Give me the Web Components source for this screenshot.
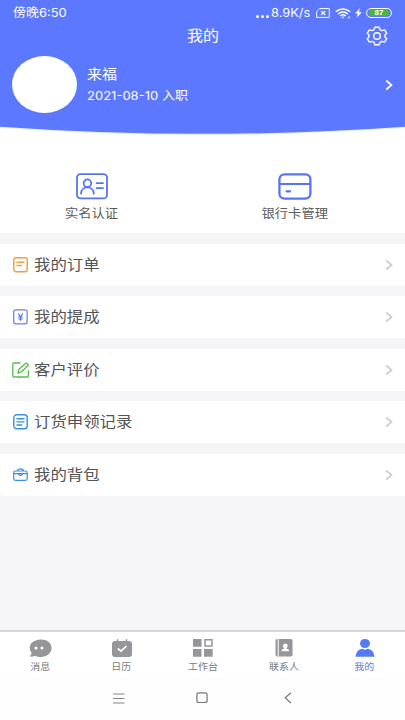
<!DOCTYPE html>
<html lang="zh-CN">
<head>
<meta charset="utf-8">
<meta name="viewport" content="width=device-width, initial-scale=1">
<title>我的</title>
<style>
html,body{margin:0;padding:0}
body{width:405px;height:720px;overflow:hidden;background:#fff;font-family:"Noto Sans CJK SC",sans-serif;color:#505050}
</style>
</head>
<body>
<mine-app></mine-app>
<script>
const define = (name, html) => customElements.define(name, class extends HTMLElement {
  connectedCallback() {
    if (this.shadowRoot) return;
    const t = document.createElement('template');
    t.innerHTML = typeof html === 'function' ? html(this) : html;
    this.attachShadow({mode:'open'}).append(t.content.cloneNode(true));
  }
});

const icons = {
  gear: [22,20,'<g fill="none" stroke="#fff" stroke-width="1.4" stroke-linejoin="round"><path d="M8.8 1.2h4.4l.7 2.5 2 1 2.7-.8 2.1 3.3-1.7 1.8v2l1.7 1.8-2.1 3.3-2.7-.7-2 1-.7 2.4H8.8l-.7-2.4-2-1-2.7.7-2.1-3.3L3 11V9L1.300 7.200l2.100-3.300 2.700.8 2-1z"/><circle cx="11" cy="10" r="3.300"/></g>'],
  sim: [14,10,'<path d="M3.500.6h9.800v8.800H.7V3.400z" fill="none" stroke="#fff"/><path d="M5 3l4.300 4M9.300 3L5 7" stroke="#fff" stroke-width="1.100"/>'],
  wifi: [16,11,'<g fill="none" stroke="#fff" stroke-width="1.400"><path d="M.7 3.700c4.200-3.600 10.200-3.600 14.400 0M3 6c3-2.500 6.900-2.500 9.900 0M5.200 8c1.700-1.400 3.900-1.400 5.600 0"/></g><path d="M6.500 8.900q1.500-1 3 0L8 10.500z" fill="#fff"/><path d="M13 8.500h2v2h-2z" fill="#c9d3ff"/>'],
  bolt: [7,10,'<path d="M5.200 0L.3 5.200l2.600.5L1.500 10l5.200-5.500-2.900-.5z" fill="#fff"/>'],
  id: [32,27,'<g fill="none" stroke="#5874f3" stroke-width="1.800"><rect x="1" y="1.200" width="30" height="24.200" rx="3.500"/><circle cx="11.400" cy="10.200" r="3.800"/><path d="M5 20.700c.4-8.400 12.400-8.400 12.800 0M20.600 10.200h6.300M20.600 15.200h6.300" stroke-linecap="round"/></g>'],
  card: [34,27,'<g fill="none" stroke="#5874f3" stroke-width="2.300"><rect x="1.400" y="1.400" width="31" height="24.200" rx="5"/><path d="M1.400 11h31" stroke-width="2"/><path d="M8.500 18.300h3.500" stroke-width="2.300" stroke-linecap="round"/></g>'],
  order: [15,16,'<g fill="none" stroke="#eda03e" stroke-width="1.400"><rect x=".8" y=".8" width="13.400" height="14" rx="2"/><path d="M3.500 5.200h8M3.500 8.500H9"/></g>'],
  money: [15,16,'<g fill="none" stroke="#7379e4" stroke-width="1.200"><rect x=".7" y=".8" width="13.400" height="14" rx="2"/><path d="M5.200 4.500l2.300 3.300 2.300-3.300M7.500 7.800v4M5.200 8h4.600M5.200 10h4.600" stroke="#5875da"/></g>'],
  edit: [18,16,'<g fill="none" stroke="#55bd4b" stroke-width="1.300" stroke-linejoin="round"><path d="M8.300 1H2q-1.200 0-1.200 1.200v11.600Q.8 15 2 15h13.200q1.200 0 1.200-1.200V8.300"/><path d="M6 11.200l.8-3.700 6.700-6q.8-.6 1.600.1l.9.8q.7.7-.1 1.400l-6.500 6z"/></g>'],
  list: [15,16,'<g fill="none" stroke="#3990dd" stroke-width="1.400"><rect x=".8" y=".8" width="13.400" height="14" rx="2.800"/><path d="M3.500 4.800h8M3.500 7.900h8M3.500 11H9"/></g>'],
  bag: [15,13,'<g fill="none" stroke="#3990dd" stroke-width="1.200"><rect x=".7" y="3" width="13.500" height="9.300" rx="1.800"/><path d="M4.500 3q0-2.200 3-2.200t3 2.200M.9 5.600h4.600M9.500 5.600h4.600"/><path d="M5.300 5.600q2.200 3.800 4.400 0z"/></g>'],
  arrow: [8,12,'<path d="M1.200 1.500L6.500 6l-5.300 4.500" fill="none" stroke="currentColor" stroke-width="1.700"/>'],
  chat: [23,19,'<path d="M11.700.4C5.500.4.700 4 .7 8.700q0 3 2 5.100Q2.500 16 .5 17.500q2.700.3 5.300-.8 2.700 1.200 5.900 1.200c6 0 10.900-3.900 10.900-9S18 .4 11.700.4z" fill="#96969a"/><g fill="#fff"><circle cx="7" cy="9" r="1.500"/><circle cx="13" cy="9" r="1.500"/></g>'],
  calendar: [20,19,'<path d="M3 2h14q3 0 3 3v10q0 3-3 3H3q-3 0-3-3V5q0-3 3-3z" fill="#96969a"/><path d="M5.500.2v2.500M14.500.2v2.500" stroke="#96969a" stroke-width="1.500"/><path d="M5.800 9.500L9 12.200 14.500 7" fill="none" stroke="#fff" stroke-width="1.700"/>'],
  grid: [20,18,'<path d="M0 0h8.500v7.700H0zM0 10h8.500v7.700H0zM11 10h8.700v7.700H11z" fill="#96969a"/><path d="M12 .8h7v6.300h-7z" fill="none" stroke="#96969a" stroke-width="1.500"/>'],
  contacts: [18,18,'<rect x=".5" width="17" height="17.500" rx="1.800" fill="#96969a"/><path d="M3.200 0v17.500" stroke="#fff"/><circle cx="10.300" cy="6.900" r="2.400" fill="#fff"/><path d="M9.300 7.500h2v2q3 .7 3 2.800H6.300q0-2.100 3-2.800z" fill="#fff"/>'],
  user: [20,18,'<ellipse cx="10" cy="4.500" rx="5" ry="4.500" fill="#5879f6"/><path d="M.4 17.700q1.200-7.500 6.800-7.900l2.800 1 2.800-1q5.600.4 6.800 7.900z" fill="#5879f6"/>'],
  menu: [12,11,'<path d="M0 1h11.500M0 5.500h11.500M0 10h11.500" stroke="#858585" stroke-width="1.100"/>'],
  home: [12,12,'<rect x=".9" y=".9" width="10.200" height="9.600" rx="2" fill="none" stroke="#777" stroke-width="1.200"/>'],
  back: [8,12,'<path d="M6.900.7L1.200 5.800l5.700 5.200" fill="none" stroke="#777" stroke-width="1.200"/>']
};

define('mine-icon', el => {
  const [w,h,s] = icons[el.getAttribute('name')];
  return `<style>:host{display:block;flex:none;width:${w}px;height:${h}px}svg{display:block}</style><svg width="${w}" height="${h}" viewBox="0 0 ${w} ${h}">${s}</svg>`;
});

/* A line of text with a slightly widened face */
define('mine-label', el => `<style>
:host{display:block;flex:none;white-space:nowrap;line-height:1.4}
span{display:inline-block;transform:scaleX(${el.getAttribute('stretch')||1});transform-origin:${el.getAttribute('from')||'left'} center}
</style><span><slot></slot></span>`);

define('status-bar', `<style>
:host{display:flex;align-items:center;height:26px;padding:0 13px 0 13px;color:#fff;font:12px Inter,"Noto Sans CJK SC",sans-serif}
.space{flex:1}.dots{display:flex;gap:2px;margin:6px 2px 0 0}.dots i{width:3px;height:3px;border-radius:50%;background:#fff}
.sim{margin-left:8px}.wifi{margin-left:5px}.bolt{margin:0 4px 0 4px}
.battery{box-sizing:border-box;width:26px;height:10px;border:1px solid #fff;border-radius:5px;padding:1px 2px;display:flex}
.fill{flex:1;border-radius:3px;background:#49b934;font:bold 8px/6.500px "Liberation Sans",sans-serif;text-align:center}
</style>
<mine-label stretch="1.08">傍晚6:50</mine-label><span class="space"></span>
<span class="dots"><i></i><i></i><i></i></span><mine-label stretch="1.07">8.9K/s</mine-label>
<mine-icon class="sim" name="sim"></mine-icon><mine-icon class="wifi" name="wifi"></mine-icon><mine-icon class="bolt" name="bolt"></mine-icon>
<div class="battery"><div class="fill">87</div></div>`);

define('profile-header', `<style>
:host{display:block;position:relative;height:134px;color:#fff}
.bg{position:absolute;inset:0;display:block}
.content{position:relative}
.title{display:grid;grid-template-columns:1fr auto 1fr;align-items:center;height:20px;font-size:15px}
.title mine-label{margin:-3px 0 1px 2px}
.title mine-icon{justify-self:end;margin-right:17px}
.person{display:flex;align-items:center;height:57px;margin:10px 12px 0}
.avatar{width:65px;height:57px;border-radius:50%;background:#fff}
.who{margin-left:10px;flex:1;font-size:14px}
.date{display:flex;font:12px/17px Inter,"Noto Sans CJK SC",sans-serif;gap:9.500px;margin-top:4px}
</style>
<svg class="bg" width="405" height="136" viewBox="0 0 405 136"><path d="M0 0H405V128Q202.500 142.400 0 128Z" fill="#e9f1fd"/><path d="M0 0H405V126.700Q202.500 141 0 126.700Z" fill="#5b78fe"/></svg>
<div class="content"><status-bar></status-bar>
<div class="title"><span></span><mine-label stretch="1.07" from="center">我的</mine-label><mine-icon name="gear"></mine-icon></div>
<div class="person"><div class="avatar"></div><div class="who"><mine-label stretch="1.07">来福</mine-label><div class="date"><mine-label stretch="1.085">2021-08-10</mine-label><mine-label stretch="1.08">入职</mine-label></div></div><mine-icon name="arrow"></mine-icon></div></div>`);

define('quick-action', el => `<style>
:host{display:flex;flex-direction:column;align-items:center;font-size:12.300px;color:#5b5b5b}
div{height:27px;display:flex;align-items:center;margin-bottom:5px}
</style><div><mine-icon name="${el.getAttribute('icon')}"></mine-icon></div><mine-label stretch="1.08" from="center"><slot></slot></mine-label>`);

define('menu-row', el => `<style>
:host{display:flex;align-items:center;height:42px;background:#fff;padding:0 12px 0 13px;font-size:15.200px;color:#545454}
.icon{width:21px;display:flex}
:host([icon="edit"]) .icon{margin-left:-1px;width:22px}
mine-label{flex:1;margin-bottom:2px}.go{color:#cdcdcd}
</style><span class="icon"><mine-icon name="${el.getAttribute('icon')}"></mine-icon></span><mine-label stretch="1.08"><slot></slot></mine-label><mine-icon class="go" name="arrow"></mine-icon>`);

define('tab-item', el => `<style>
:host{display:flex;flex-direction:column;align-items:center;padding-top:7px;font-size:9.300px;color:#7b7b7f}
:host([active]){color:#6280dc}
div{height:19px}mine-label{margin-top:1.500px}
</style><div><mine-icon name="${el.getAttribute('icon')}"></mine-icon></div><mine-label stretch="1.07" from="center"><slot></slot></mine-label>`);

define('tab-bar', `<style>
:host{display:grid;grid-template-columns:repeat(5,1fr);box-sizing:border-box;height:46px;border-top:2px solid #d6d6db;background:#fff}
</style><tab-item icon="chat">消息</tab-item><tab-item icon="calendar">日历</tab-item><tab-item icon="grid">工作台</tab-item><tab-item icon="contacts">联系人</tab-item><tab-item icon="user" active>我的</tab-item>`);

define('system-nav', `<style>
:host{display:flex;align-items:center;height:44px;padding-left:113px;background:#fefefe;box-sizing:border-box}
mine-icon:nth-of-type(2){margin:0 76px 0 71px}
</style><mine-icon name="menu"></mine-icon><mine-icon name="home"></mine-icon><mine-icon name="back"></mine-icon>`);

define('mine-app', `<style>
:host{display:flex;flex-direction:column;width:405px;height:720px;background:#fff}
.actions{display:grid;grid-template-columns:184px 221px;height:99px;box-sizing:border-box;padding-top:39px}
.list{flex:1;display:flex;flex-direction:column;gap:10.500px;padding-top:10.500px;background:#f5f5f8}
</style>
<profile-header></profile-header>
<div class="actions"><quick-action icon="id">实名认证</quick-action><quick-action icon="card">银行卡管理</quick-action></div>
<div class="list"><menu-row icon="order">我的订单</menu-row><menu-row icon="money">我的提成</menu-row><menu-row icon="edit">客户评价</menu-row><menu-row icon="list">订货申领记录</menu-row><menu-row icon="bag">我的背包</menu-row></div>
<tab-bar></tab-bar><system-nav></system-nav>`);
</script>
</body>
</html>
